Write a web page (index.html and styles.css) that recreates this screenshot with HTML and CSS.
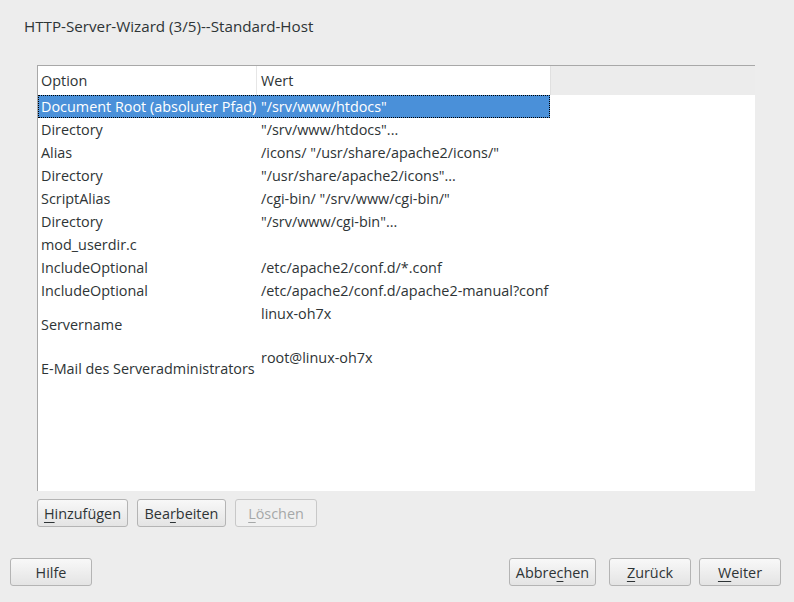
FILE: index.html
```html
<!DOCTYPE html>
<html>
<head>
<meta charset="utf-8">
<link rel="stylesheet" href="styles.css">
</head>
<body>
<div class="dialog">
  <div class="title">HTTP-Server-Wizard (3/5)--Standard-Host</div>
  <div class="table">
    <div class="thead">
      <div class="th c1">Option</div>
      <div class="th c2">Wert</div>
      <div class="th filler"></div>
    </div>
    <div class="tbody">
      <div class="row selected"><div class="c1">Document Root (absoluter Pfad)</div><div class="c2">"/srv/www/htdocs"</div></div>
      <div class="row"><div class="c1">Directory</div><div class="c2">"/srv/www/htdocs"...</div></div>
      <div class="row"><div class="c1">Alias</div><div class="c2">/icons/ "/usr/share/apache2/icons/"</div></div>
      <div class="row"><div class="c1">Directory</div><div class="c2">"/usr/share/apache2/icons"...</div></div>
      <div class="row"><div class="c1">ScriptAlias</div><div class="c2">/cgi-bin/ "/srv/www/cgi-bin/"</div></div>
      <div class="row"><div class="c1">Directory</div><div class="c2">"/srv/www/cgi-bin"...</div></div>
      <div class="row"><div class="c1">mod_userdir.c</div><div class="c2"></div></div>
      <div class="row"><div class="c1">IncludeOptional</div><div class="c2">/etc/apache2/conf.d/*.conf</div></div>
      <div class="row"><div class="c1">IncludeOptional</div><div class="c2">/etc/apache2/conf.d/apache2-manual?conf</div></div>
      <div class="row tall"><div class="c1">Servername</div><div class="c2">linux-oh7x</div></div>
      <div class="row tall"><div class="c1">E-Mail des Serveradministrators</div><div class="c2">root@linux-oh7x</div></div>
    </div>
  </div>
  <div class="table-buttons">
    <button class="btn b-add"><u>H</u>inzufügen</button>
    <button class="btn b-edit">Bea<u>r</u>beiten</button>
    <button class="btn b-del" disabled><u>L</u>öschen</button>
  </div>
  <div class="footer">
    <button class="btn b-help">Hilfe</button>
    <div class="spacer"></div>
    <button class="btn b-cancel">Abbre<u>c</u>hen</button>
    <button class="btn b-back"><u>Z</u>urück</button>
    <button class="btn b-next"><u>W</u>eiter</button>
  </div>
</div>
</body>
</html>
```
FILE: styles.css
```css
html, body {
  margin: 0;
  padding: 0;
  background: #ededed;
}
body {
  width: 794px;
  height: 602px;
  overflow: hidden;
  font-family: "Open Sans", "DejaVu Sans", sans-serif;
  font-size: 14.4px;
  color: #2e3436;
}
.dialog {
  display: flex;
  flex-direction: column;
}
.title {
  margin: 16px 0 0 24px;
  height: 20px;
  line-height: 20px;
  font-size: 15.2px;
  color: #2e3436;
}
.table {
  margin: 29px 0 0 37px;
  width: 718px;
  height: 426px;
  background: #fff;
  border-top: 1px solid #a8a8a8;
  border-left: 1px solid #a8a8a8;
  box-sizing: border-box;
  display: flex;
  flex-direction: column;
}
.thead {
  display: flex;
  height: 29px;
}
.th {
  line-height: 29px;
  box-sizing: border-box;
  color: #2e3436;
}
.th.c1 {
  width: 219px;
  padding-left: 3px;
  border-right: 1px solid #e6e6e6;
}
.th.c2 {
  width: 293px;
  padding-left: 4px;
}
.th.filler {
  flex: 1;
  background: #ececec;
  border-left: 1px solid #e0e0e0;
}
.row {
  display: flex;
  height: 23px;
  line-height: 23px;
  width: 512px;
  box-sizing: border-box;
}
.row .c1 {
  width: 219px;
  padding-left: 3px;
  box-sizing: border-box;
  white-space: nowrap;
}
.row .c2 {
  flex: 1;
  padding-left: 4px;
  white-space: nowrap;
}
.row.selected {
  background: #4a90d9;
  color: #fff;
  outline: 1px dotted #000;
  outline-offset: -1px;
}
.row.tall {
  height: 44px;
  align-items: center;
}
.row.tall .c2 {
  align-self: flex-start;
  line-height: 23px;
}
.table-buttons {
  display: flex;
  gap: 9px;
  margin: 8px 0 0 37px;
}
.btn {
  font-family: "Open Sans", "DejaVu Sans", sans-serif;
  font-size: 14.4px;
  color: #2e3436;
  height: 28px;
  padding: 0;
  border: 1px solid #b4b4b4;
  border-radius: 3px;
  background: linear-gradient(#f8f8f8, #e4e4e4);
  box-sizing: border-box;
}
.btn u {
  text-underline-offset: 3px;
}
.btn:disabled {
  color: #a6a8a8;
  background: #f0f0f0;
  border-color: #c8c8c8;
}
.b-add { width: 91px; }
.b-edit { width: 89px; }
.b-del { width: 82px; }
.footer {
  display: flex;
  margin: 31px 13px 0 10px;
}
.spacer { flex: 1; }
.b-help { width: 82px; }
.b-cancel { width: 87px; margin-right: 13px; }
.b-back { width: 82px; margin-right: 8px; }
.b-next { width: 82px; }
```
